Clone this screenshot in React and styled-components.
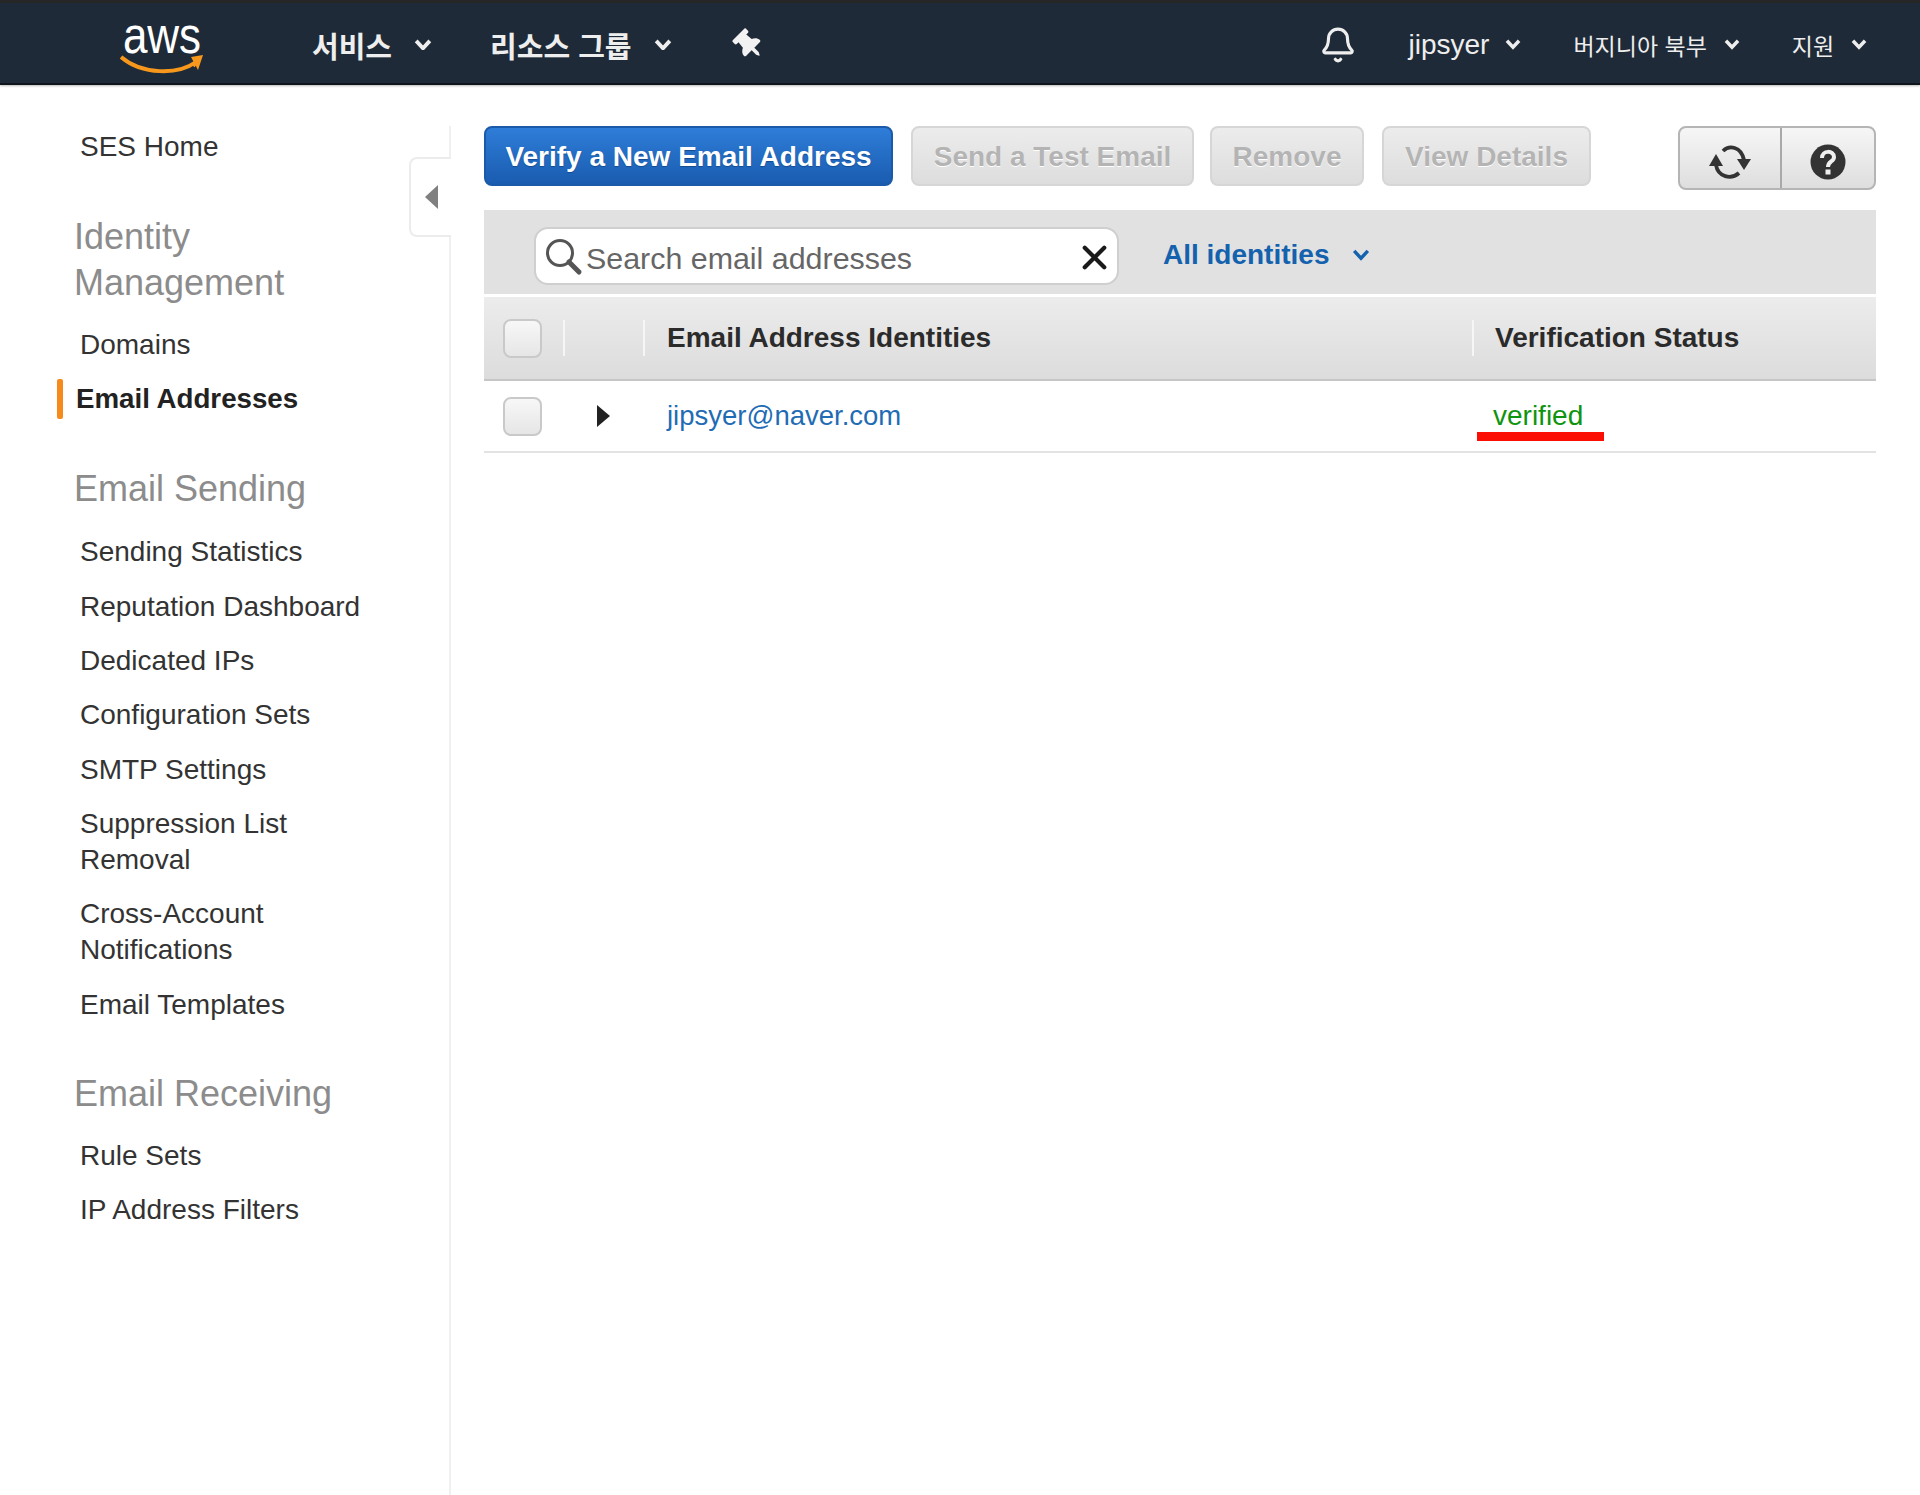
import React from "react";
import styled, { createGlobalStyle } from "styled-components";
import { Bell, X } from "lucide-react";
import { FaThumbtack } from "react-icons/fa";

const Global = createGlobalStyle`
  html, body { margin: 0; padding: 0; background: #fff; }
  body { font-family: "Liberation Sans", Arial, "Noto Sans CJK KR", sans-serif; color: #333; }
  * { box-sizing: border-box; }
`;

const Page = styled.div`
  width: 1920px;
  height: 1495px;
  display: flex;
  flex-direction: column;
  overflow: hidden;
`;

const TopBar = styled.header`
  height: 85px;
  flex: none;
  display: flex;
  align-items: center;
  padding-top: 3px;
  background: #1f2a38;
  border-top: 3px solid #262626;
  border-bottom: 2px solid #10151c;
  box-shadow: 0 1px 2px #bbb;
  color: #eee;
`;

const Logo = styled.div`
  width: 84px;
  height: 56px;
  margin: 0 108px 0 120px;
  position: relative;
  flex: none;
  display: flex;
  justify-content: center;
`;

const LogoWord = styled.span`
  display: block;
  font-size: 44px;
  line-height: 34px;
  height: 34px;
  color: #fff;
  transform: scaleY(1.18);
  transform-origin: 50% 50%;
  margin-top: 1px;
`;

const Smile = styled.svg`
  position: absolute;
  left: 0;
  bottom: -2px;
`;

const NavItem = styled.div`
  display: flex;
  align-items: center;
  font-size: ${(p) => p.$size || 27}px;
  font-weight: ${(p) => (p.$bold ? 700 : 400)};
  color: #eee;
  margin-left: ${(p) => p.$ml || 0}px;
  gap: ${(p) => p.$gap || 18}px;
  white-space: nowrap;
`;

const Caret = styled.svg`
  flex: none;
`;

const Body = styled.div`
  flex: 1;
  display: flex;
  min-height: 0;
`;

const Aside = styled.aside`
  width: 451px;
  flex: none;
  margin-top: 41px;
  padding: 3px 0 0 80px;
  border-right: 2px solid #f0f0f0;
  position: relative;
`;

const Collapse = styled.div`
  position: absolute;
  left: 409px;
  top: 31px;
  width: 42px;
  height: 80px;
  background: #fff;
  border: 2px solid #ececec;
  border-right: none;
  border-radius: 8px 0 0 8px;
  display: flex;
  align-items: center;
  padding-left: 14px;
`;

const SideLink = styled.div`
  font-size: 28px;
  line-height: 36px;
  width: 285px;
  color: #333;
`;

const ActiveLink = styled.div`
  font-size: 27.7px;
  line-height: 36px;
  font-weight: 700;
  color: #222;
  margin-left: -4px;
  position: relative;
  &::before {
    content: "";
    position: absolute;
    left: -19px;
    top: -2px;
    width: 6px;
    height: 40px;
    border-radius: 2px;
    background: #f78a1d;
  }
`;

const SideHeading = styled.h2`
  margin: ${(p) => p.$mt}px 0 ${(p) => p.$mb}px -6px;
  font-size: 36px;
  line-height: 46px;
  font-weight: 400;
  color: #8c8c8c;
  width: 280px;
`;

const SideList = styled.nav`
  display: flex;
  flex-direction: column;
  gap: 18.35px;
`;

const Main = styled.main`
  flex: 1;
  padding: 41px 44px 0 33px;
  min-width: 0;
`;

const Toolbar = styled.div`
  height: 84px;
  display: flex;
  align-items: flex-start;
`;

const Btn = styled.button`
  height: 60px;
  width: ${(p) => p.$w}px;
  margin-right: ${(p) => p.$mr || 0}px;
  padding: 2px 0 0;
  font: 700 28px "Liberation Sans", Arial, sans-serif;
  border-radius: 8px;
  border: 2px solid ${(p) => (p.$primary ? "#1b5aa8" : "#d6d6d6")};
  background: ${(p) =>
    p.$primary
      ? "linear-gradient(#2e7dd8, #1a5cb0)"
      : "linear-gradient(#ececec, #dddddd)"};
  color: ${(p) => (p.$primary ? "#fff" : "#b4b4b4")};
  text-shadow: ${(p) => (p.$primary ? "0 1px 1px #134a8f" : "0 1px 0 #fff")};
`;

const IconGroup = styled.div`
  margin-left: auto;
  display: flex;
  width: 198px;
  height: 64px;
  border: 2px solid #b5b5b5;
  border-radius: 8px;
  background: linear-gradient(#f6f6f6, #dedede);
`;

const IconCell = styled.div`
  width: ${(p) => p.$w}px;
  padding: 7px 0 0 ${(p) => p.$pl || 0}px;
  display: flex;
  align-items: center;
  justify-content: center;
  border-left: ${(p) => (p.$div ? "2px solid #a9a9a9" : "none")};
`;

const FilterBar = styled.div`
  height: 84px;
  background: #e1e1e1;
  display: flex;
  align-items: flex-start;
  padding: 17px 0 0 50px;
`;

const SearchBox = styled.div`
  width: 585px;
  height: 58px;
  background: #fff;
  border: 2px solid #cfcfcf;
  border-radius: 14px;
  display: flex;
  align-items: center;
  padding: 2px 3px 0 9px;
  color: #444;
`;

const SearchText = styled.span`
  flex: 1;
  font-size: 30.4px;
  color: #666;
  margin-left: 3px;
  padding-top: 3px;
`;

const Filter = styled.div`
  margin: 10px 0 0 44px;
  display: flex;
  align-items: center;
  gap: 23px;
  font-size: 28px;
  font-weight: 700;
  line-height: 36px;
  color: #1461ae;
`;

const Row = styled.div`
  display: grid;
  grid-template-columns: 79px 80px 829px 1fr;
  align-items: center;
`;

const HeadRow = styled(Row)`
  height: 84px;
  margin-top: 3px;
  background: linear-gradient(#ececec, #dcdcdc);
  border-bottom: 2px solid #c6c6c6;
`;

const DataRow = styled(Row)`
  height: 72px;
  border-bottom: 2px solid #e3e3e3;
`;

const Cell = styled.div`
  height: 36px;
  display: flex;
  align-items: center;
  padding-left: ${(p) => p.$pl || 0}px;
  border-left: ${(p) => (p.$div ? "2px solid #f6f6f6" : "none")};
`;

const Check = styled.div`
  width: 39px;
  height: 39px;
  border: 2px solid #c9c9c9;
  border-radius: 8px;
  background: linear-gradient(#f7f7f7, #e6e6e6);
`;

const Triangle = styled.div`
  width: 0;
  height: 0;
  border-left: 13px solid #222;
  border-top: 11px solid transparent;
  border-bottom: 11px solid transparent;
`;

const HeadText = styled.span`
  font-size: 28px;
  font-weight: 700;
  color: #2b2b2b;
`;

const Address = styled.span`
  font-size: 27.5px;
  color: #1f6cb4;
`;

const Verified = styled.span`
  font-size: 28px;
  color: #0f9410;
  position: relative;
  &::after {
    content: "";
    position: absolute;
    left: -16px;
    top: 32px;
    width: 127px;
    height: 9px;
    background: #fb0f05;
  }
`;

const CaretDown = ({ w = 18, color = "#eee", sw = 4 }) => (
  <Caret width={w} height={w * 0.65} viewBox="0 0 18 12">
    <path d="M2 2 L9 9.5 L16 2" fill="none" stroke={color} strokeWidth={sw} />
  </Caret>
);

const Items1 = ["Sending Statistics", "Reputation Dashboard", "Dedicated IPs", "Configuration Sets", "SMTP Settings", "Suppression List Removal", "Cross-Account Notifications", "Email Templates"];

export default function App() {
  return (
    <Page>
      <Global />
      <TopBar>
        <Logo>
          <LogoWord>aws</LogoWord>
          <Smile width="84" height="22" viewBox="0 0 84 22">
            <path d="M1 4 C22 22 58 22 76 9 L73 13" fill="none" stroke="#f7981d" strokeWidth="4" />
            <path d="M71 4 L83 2 L78 17 Z" fill="#f7981d" />
          </Smile>
        </Logo>
        <NavItem $bold $size={29} $gap={22}>서비스 <CaretDown /></NavItem>
        <NavItem $bold $size={29} $gap={22} $ml={58}>리소스 그룹 <CaretDown /></NavItem>
        <NavItem $ml={62}><FaThumbtack size={30} color="#f2f2f2" style={{ transform: "rotate(-45deg)" }} /></NavItem>
        <NavItem $ml={555}><Bell size={38} strokeWidth={2} color="#eee" /></NavItem>
        <NavItem $ml={52} $size={28} $gap={16}>jipsyer <CaretDown w={16} /></NavItem>
        <NavItem $ml={52} $size={23} $gap={17}>버지니아 북부 <CaretDown w={16} /></NavItem>
        <NavItem $ml={52} $size={23} $gap={17}>지원 <CaretDown w={16} /></NavItem>
      </TopBar>
      <Body>
        <Aside>
          <Collapse>
            <svg width="13" height="24" viewBox="0 0 13 24"><path d="M13 0 V24 L0 12 Z" fill="#808080" /></svg>
          </Collapse>
          <SideLink>SES Home</SideLink>
          <SideHeading $mt={49} $mb={21}>Identity Management</SideHeading>
          <SideList>
            <SideLink>Domains</SideLink>
            <ActiveLink>Email Addresses</ActiveLink>
          </SideList>
          <SideHeading $mt={49} $mb={22}>Email Sending</SideHeading>
          <SideList>
            {Items1.map((t) => (
              <SideLink key={t}>{t}</SideLink>
            ))}
          </SideList>
          <SideHeading $mt={48} $mb={21}>Email Receiving</SideHeading>
          <SideList>
            <SideLink>Rule Sets</SideLink>
            <SideLink>IP Address Filters</SideLink>
          </SideList>
        </Aside>
        <Main>
          <Toolbar>
            <Btn $primary $w={409} $mr={18}>Verify a New Email Address</Btn>
            <Btn disabled $w={283} $mr={16}>Send a Test Email</Btn>
            <Btn disabled $w={154} $mr={18}>Remove</Btn>
            <Btn disabled $w={209}>View Details</Btn>
            <IconGroup>
              <IconCell $w={101} $pl={3}>
                <svg width="44" height="40" viewBox="0 0 44 40">
                  <path d="M14 9 C20 3 32 4 35 18" fill="none" stroke="#333" strokeWidth="3.8" />
                  <path d="M7 12 L14 24 L0 24 Z" fill="#333" />
                  <path d="M7 23 C9 35 22 38 30 31" fill="none" stroke="#333" strokeWidth="3.8" />
                  <path d="M35 28 L42 17 L28 17 Z" fill="#333" />
                </svg>
              </IconCell>
              <IconCell $w={95} $div>
                <svg width="36" height="36" viewBox="0 0 36 36">
                  <circle cx="18" cy="18" r="17.5" fill="#333" />
                  <path d="M12 14 C12 6 24 6 24 13 C24 18 18 17 18 23" fill="none" stroke="#f0f0f0" strokeWidth="4" />
                  <rect x="15.5" y="25.5" width="5" height="5" fill="#f0f0f0" />
                </svg>
              </IconCell>
            </IconGroup>
          </Toolbar>
          <FilterBar>
            <SearchBox>
              <svg width="38" height="38" viewBox="0 0 38 38" style={{ flex: "none" }}>
                <circle cx="15" cy="15" r="12.5" fill="none" stroke="#555" strokeWidth="3" />
                <path d="M24 24 L34 34" stroke="#555" strokeWidth="5" strokeLinecap="round" />
              </svg>
              <SearchText>Search email addresses</SearchText>
              <X size={39} strokeWidth={2.6} color="#1a1a1a" />
            </SearchBox>
            <Filter>All identities <CaretDown w={18} color="#1461ae" sw={3.5} /></Filter>
          </FilterBar>
          <HeadRow>
            <Cell $pl={19}><Check /></Cell>
            <Cell $div />
            <Cell $div $pl={22}><HeadText>Email Address Identities</HeadText></Cell>
            <Cell $div $pl={21}><HeadText>Verification Status</HeadText></Cell>
          </HeadRow>
          <DataRow>
            <Cell $pl={19}><Check /></Cell>
            <Cell $pl={34}><Triangle /></Cell>
            <Cell $pl={24}><Address>jipsyer@naver.com</Address></Cell>
            <Cell $pl={21}><Verified>verified</Verified></Cell>
          </DataRow>
        </Main>
      </Body>
    </Page>
  );
}
